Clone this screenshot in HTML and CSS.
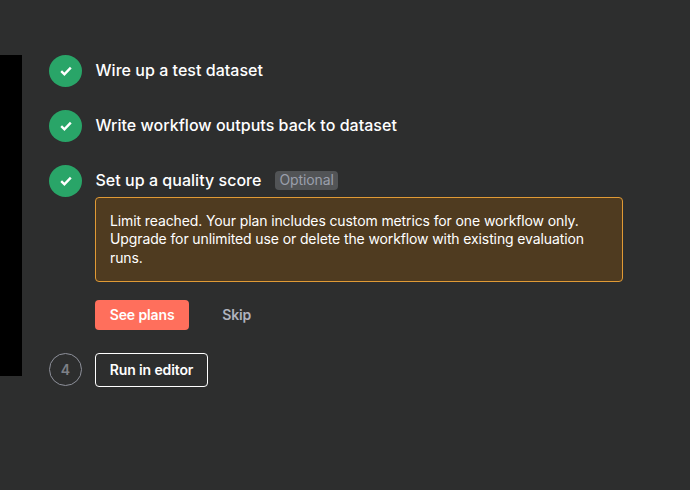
FILE: index.html
```html
<!DOCTYPE html>
<html lang="en">
<head>
  <meta charset="UTF-8">
  <meta name="viewport" content="width=device-width, initial-scale=1.0">
  <title>Evaluations</title>
  <link rel="stylesheet" href="styles.css">
</head>
<body>
  <div class="page">
    <div class="video"></div>
    <div class="steps">
      <div class="step">
        <div class="circle done">
          <svg viewBox="0 0 12 10"><path d="M1.2 5.2 4.4 8.3 10.8 1.7"/></svg>
        </div>
        <div class="step-body">
          <h3 class="step-title"><span>Wire up a test dataset</span></h3>
        </div>
      </div>
      <div class="step">
        <div class="circle done">
          <svg viewBox="0 0 12 10"><path d="M1.2 5.2 4.4 8.3 10.8 1.7"/></svg>
        </div>
        <div class="step-body">
          <h3 class="step-title"><span>Write workflow outputs back to dataset</span></h3>
        </div>
      </div>
      <div class="step">
        <div class="circle done">
          <svg viewBox="0 0 12 10"><path d="M1.2 5.2 4.4 8.3 10.8 1.7"/></svg>
        </div>
        <div class="step-body">
          <h3 class="step-title"><span>Set up a quality score</span> <span class="badge">Optional</span></h3>
          <div class="callout">Limit reached. Your plan includes custom metrics for one workflow only. Upgrade for unlimited use or delete the workflow with existing evaluation runs.</div>
          <div class="actions">
            <button class="btn btn-primary">See plans</button>
            <button class="btn btn-text">Skip</button>
          </div>
        </div>
      </div>
      <div class="step">
        <div class="circle number">4</div>
        <div class="step-body">
          <button class="btn btn-outline">Run in editor</button>
        </div>
      </div>
    </div>
  </div>
</body>
</html>
```
FILE: styles.css
```css
* {
  box-sizing: border-box;
}
body {
  margin: 0;
  background-color: #2d2e2e;
  color: #fff;
  font-family: Inter, sans-serif;
}
.page {
  display: flex;
  align-items: flex-start;
  height: 490px;
  padding-top: 54.5px;
}
.video {
  width: 22px;
  height: 321.5px;
  background-color: #000;
}
.steps {
  display: flex;
  flex-direction: column;
  gap: 23px;
  width: 574px;
  margin-left: 27px;
}
.step {
  display: flex;
  gap: 13px;
}
.circle {
  display: flex;
  align-items: center;
  justify-content: center;
  flex: none;
  width: 33px;
  height: 32px;
  border: 1px solid #8d909a;
  border-radius: 50%;
  color: #7d8087;
  font-size: 14px;
  font-weight: 600;
}
.circle.done {
  border: none;
  background-color: #29a568;
}
.circle.number {
  height: 33px;
}
.circle svg {
  width: 12px;
  height: 10px;
  fill: none;
  stroke: #fff;
  stroke-width: 2.4;
}
.step-body {
  flex: 1;
}
.step-title {
  display: flex;
  align-items: center;
  gap: 14px;
  height: 32px;
  margin: 0;
  padding: 0 0 1px 0.5px;
  font-size: 16px;
  font-weight: 500;
  letter-spacing: 0.03px;
}
.badge {
  margin-top: 1px;
  padding: 0 4px;
  border-radius: 4px;
  background-color: #525456;
  color: #9a9fab;
  font-size: 14px;
  font-weight: 400;
  line-height: 18.5px;
  letter-spacing: -0.1px;
}
.callout {
  height: 85.5px;
  padding: 14px;
  border: 1px solid #e09a35;
  border-radius: 4px;
  background-color: #4f3b20;
  font-size: 14px;
  line-height: 18.7px;
  letter-spacing: -0.115px;
}
.actions {
  display: flex;
  gap: 18.5px;
  margin-top: 18px;
}
.btn {
  height: 29.5px;
  padding: 0 14.5px;
  border: none;
  border-radius: 4px;
  background: none;
  color: #fff;
  font-family: inherit;
  font-size: 14px;
  font-weight: 600;
  letter-spacing: -0.12px;
}
.btn-primary {
  padding: 0 14.7px;
  background-color: #ff6f5c;
}
.btn-text {
  color: #b0b3bd;
}
.btn-outline {
  height: 34px;
  padding: 0 13.7px 1px;
  border: 1px solid #fff;
}
```
